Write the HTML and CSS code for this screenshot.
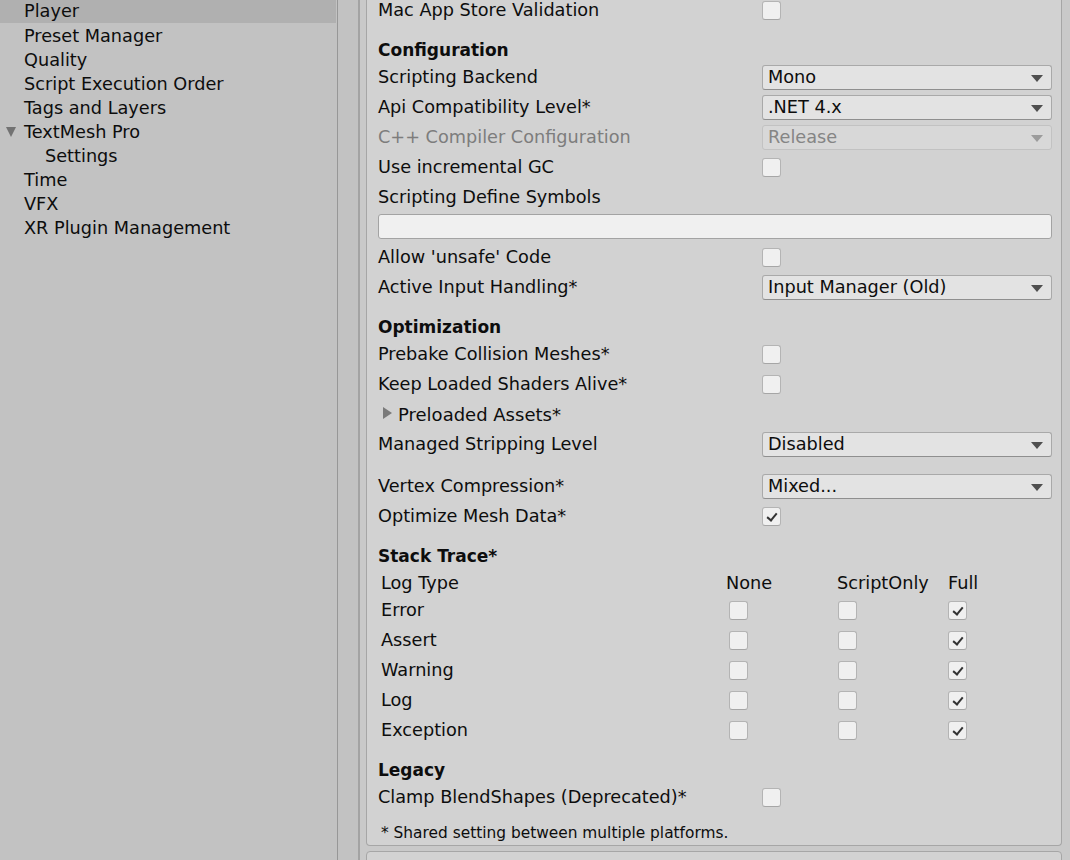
FILE: index.html
```html
<!DOCTYPE html>
<html>
<head>
<meta charset="utf-8">
<link rel="stylesheet" href="styles.css">
</head>
<body>
<div class="app">
  <nav class="sidebar">
    <div class="nav-item selected">Player</div>
    <div class="nav-item">Preset Manager</div>
    <div class="nav-item">Quality</div>
    <div class="nav-item">Script Execution Order</div>
    <div class="nav-item">Tags and Layers</div>
    <div class="nav-item has-fold"><span class="fold-down"></span>TextMesh Pro</div>
    <div class="nav-item sub">Settings</div>
    <div class="nav-item">Time</div>
    <div class="nav-item">VFX</div>
    <div class="nav-item">XR Plugin Management</div>
  </nav>
  <div class="gutter"></div>
  <main class="main">
    <section class="panel">
      <div class="row"><span class="label">Mac App Store Validation</span><span class="ctl"><span class="cb"></span></span></div>

      <div class="header">Configuration</div>
      <div class="row"><span class="label">Scripting Backend</span><span class="ctl"><span class="dd">Mono<i class="arrow"></i></span></span></div>
      <div class="row"><span class="label">Api Compatibility Level*</span><span class="ctl"><span class="dd">.NET 4.x<i class="arrow"></i></span></span></div>
      <div class="row disabled"><span class="label">C++ Compiler Configuration</span><span class="ctl"><span class="dd">Release<i class="arrow"></i></span></span></div>
      <div class="row"><span class="label">Use incremental GC</span><span class="ctl"><span class="cb"></span></span></div>
      <div class="row"><span class="label">Scripting Define Symbols</span></div>
      <div class="textfield"></div>
      <div class="row"><span class="label">Allow 'unsafe' Code</span><span class="ctl"><span class="cb"></span></span></div>
      <div class="row"><span class="label">Active Input Handling*</span><span class="ctl"><span class="dd">Input Manager (Old)<i class="arrow"></i></span></span></div>

      <div class="header">Optimization</div>
      <div class="row"><span class="label">Prebake Collision Meshes*</span><span class="ctl"><span class="cb"></span></span></div>
      <div class="row"><span class="label">Keep Loaded Shaders Alive*</span><span class="ctl"><span class="cb"></span></span></div>
      <div class="row foldout"><span class="fold-right"></span><span class="fold-label">Preloaded Assets*</span></div>
      <div class="row"><span class="label">Managed Stripping Level</span><span class="ctl"><span class="dd">Disabled<i class="arrow"></i></span></span></div>
      <div class="row spaced"><span class="label">Vertex Compression*</span><span class="ctl"><span class="dd">Mixed...<i class="arrow"></i></span></span></div>
      <div class="row"><span class="label">Optimize Mesh Data*</span><span class="ctl"><span class="cb checked"></span></span></div>

      <div class="header">Stack Trace*</div>
      <div class="trace">
        <div class="trow thead"><span class="tname">Log Type</span><span class="tcol">None</span><span class="tcol">ScriptOnly</span><span class="tcol last">Full</span></div>
        <div class="trow"><span class="tname">Error</span><span class="tcol"><span class="cb"></span></span><span class="tcol"><span class="cb"></span></span><span class="tcol last"><span class="cb checked"></span></span></div>
        <div class="trow"><span class="tname">Assert</span><span class="tcol"><span class="cb"></span></span><span class="tcol"><span class="cb"></span></span><span class="tcol last"><span class="cb checked"></span></span></div>
        <div class="trow"><span class="tname">Warning</span><span class="tcol"><span class="cb"></span></span><span class="tcol"><span class="cb"></span></span><span class="tcol last"><span class="cb checked"></span></span></div>
        <div class="trow"><span class="tname">Log</span><span class="tcol"><span class="cb"></span></span><span class="tcol"><span class="cb"></span></span><span class="tcol last"><span class="cb checked"></span></span></div>
        <div class="trow"><span class="tname">Exception</span><span class="tcol"><span class="cb"></span></span><span class="tcol"><span class="cb"></span></span><span class="tcol last"><span class="cb checked"></span></span></div>
      </div>

      <div class="header">Legacy</div>
      <div class="row"><span class="label">Clamp BlendShapes (Deprecated)*</span><span class="ctl"><span class="cb"></span></span></div>
      <div class="footnote">* Shared setting between multiple platforms.</div>
    </section>
    <section class="panel next"></section>
  </main>
</div>
</body>
</html>
```
FILE: styles.css
```css
* { box-sizing: border-box; }
html, body { margin: 0; padding: 0; }
body {
  width: 1070px;
  height: 860px;
  overflow: hidden;
  background: #c6c6c6;
  font-family: "DejaVu Sans", Verdana, sans-serif;
  font-size: 17.7px;
  color: #0d0d0d;
}
.app {
  display: flex;
  height: 860px;
}
.sidebar {
  width: 338px;
  flex: none;
  background: #c2c2c2;
  border-right: 1px solid #979797;
  padding-top: 1px;
}
.nav-item {
  height: 24px;
  line-height: 24px;
  padding-left: 24px;
  margin-right: 1px;
  white-space: nowrap;
  position: relative;
}
.nav-item.selected {
  background: #b0b0b0;
  height: 23px;
  line-height: 22px;
  margin-top: -1px;
  margin-bottom: 1px;
}
.nav-item.sub { padding-left: 45px; }
.fold-down {
  position: absolute;
  left: 6px;
  top: 7px;
  width: 0;
  height: 0;
  border-left: 5px solid transparent;
  border-right: 5px solid transparent;
  border-top: 10px solid #727272;
}
.gutter {
  width: 22px;
  flex: none;
  background: #c2c2c2;
  border-right: 2px solid #a3a3a3;
}
.main {
  flex: 1;
  display: flex;
  flex-direction: column;
  padding: 0 8px 0 6px;
  background: #c9c9c9;
  overflow: hidden;
}
.panel {
  background: #d2d2d2;
  border: 1px solid #a6a6a6;
  border-top: none;
  border-radius: 0 0 4px 4px;
  margin-top: -5px;
  padding: 0 9px 0 11px;
}
.panel.next {
  margin-top: 5px;
  border-top: 1px solid #a6a6a6;
  border-radius: 4px 4px 0 0;
  height: 40px;
  flex: none;
}
.row {
  display: flex;
  align-items: center;
  height: 30px;
  white-space: nowrap;
}
.row.spaced { margin-top: 12px; }
.label { width: 384px; flex: none; }
.ctl { flex: 1; display: flex; align-items: center; }
.disabled .label { color: #7d7d7d; }
.header {
  font-weight: bold;
  height: 24px;
  line-height: 24px;
  margin-top: 13px;
  font-size: 17px;
}
.dd {
  flex: 1;
  height: 25px;
  line-height: 23px;
  padding-left: 5px;
  background: #e3e3e3;
  border: 1px solid #a9a9a9;
  border-bottom-color: #8f8f8f;
  border-radius: 3px;
  position: relative;
}
.disabled .dd {
  background: #d8d8d8;
  color: #858585;
  border-color: #c2c2c2;
}
.arrow {
  position: absolute;
  right: 8px;
  top: 9px;
  width: 0;
  height: 0;
  border-left: 6px solid transparent;
  border-right: 6px solid transparent;
  border-top: 7px solid #4f4f4f;
}
.disabled .arrow { border-top-color: #9c9c9c; }
.cb {
  display: inline-block;
  width: 19px;
  height: 19px;
  background: #f0f0f0;
  border: 1px solid #b4b4b4;
  border-bottom-color: #a6a6a6;
  border-radius: 3px;
  position: relative;
  flex: none;
}
.cb.checked::after {
  content: "";
  position: absolute;
  left: 6px;
  top: 3px;
  width: 4px;
  height: 8px;
  border-right: 2px solid #333;
  border-bottom: 2px solid #333;
  transform: rotate(40deg);
}
.textfield {
  height: 25px;
  margin: 2px 0 3px;
  background: #f0f0f0;
  border: 1px solid #a3a3a3;
  border-radius: 3px;
}
.foldout { padding-left: 5px; }
.fold-right {
  width: 0;
  height: 0;
  border-top: 6px solid transparent;
  border-bottom: 6px solid transparent;
  border-left: 9px solid #7a7a7a;
  margin-right: 6px;
  margin-top: -3px;
}
.fold-label { font-size: 18px; }
.trace { padding-left: 3px; }
.trow {
  display: flex;
  align-items: center;
  height: 30px;
  white-space: nowrap;
}
.trow.thead { height: 27px; padding-top: 3px; }
.tname { width: 345px; flex: none; }
.tcol { width: 111px; flex: none; display: flex; align-items: center; }
.trow .tcol .cb { margin-left: 3px; }
.trow .tcol:nth-child(3) .cb { margin-left: 1px; }
.trow .tcol.last .cb { margin-left: 0; }
.tcol.last { width: auto; }
.footnote {
  height: 24px;
  line-height: 24px;
  margin-top: 9px;
  font-size: 15.4px;
  padding-left: 3px;
}
```
